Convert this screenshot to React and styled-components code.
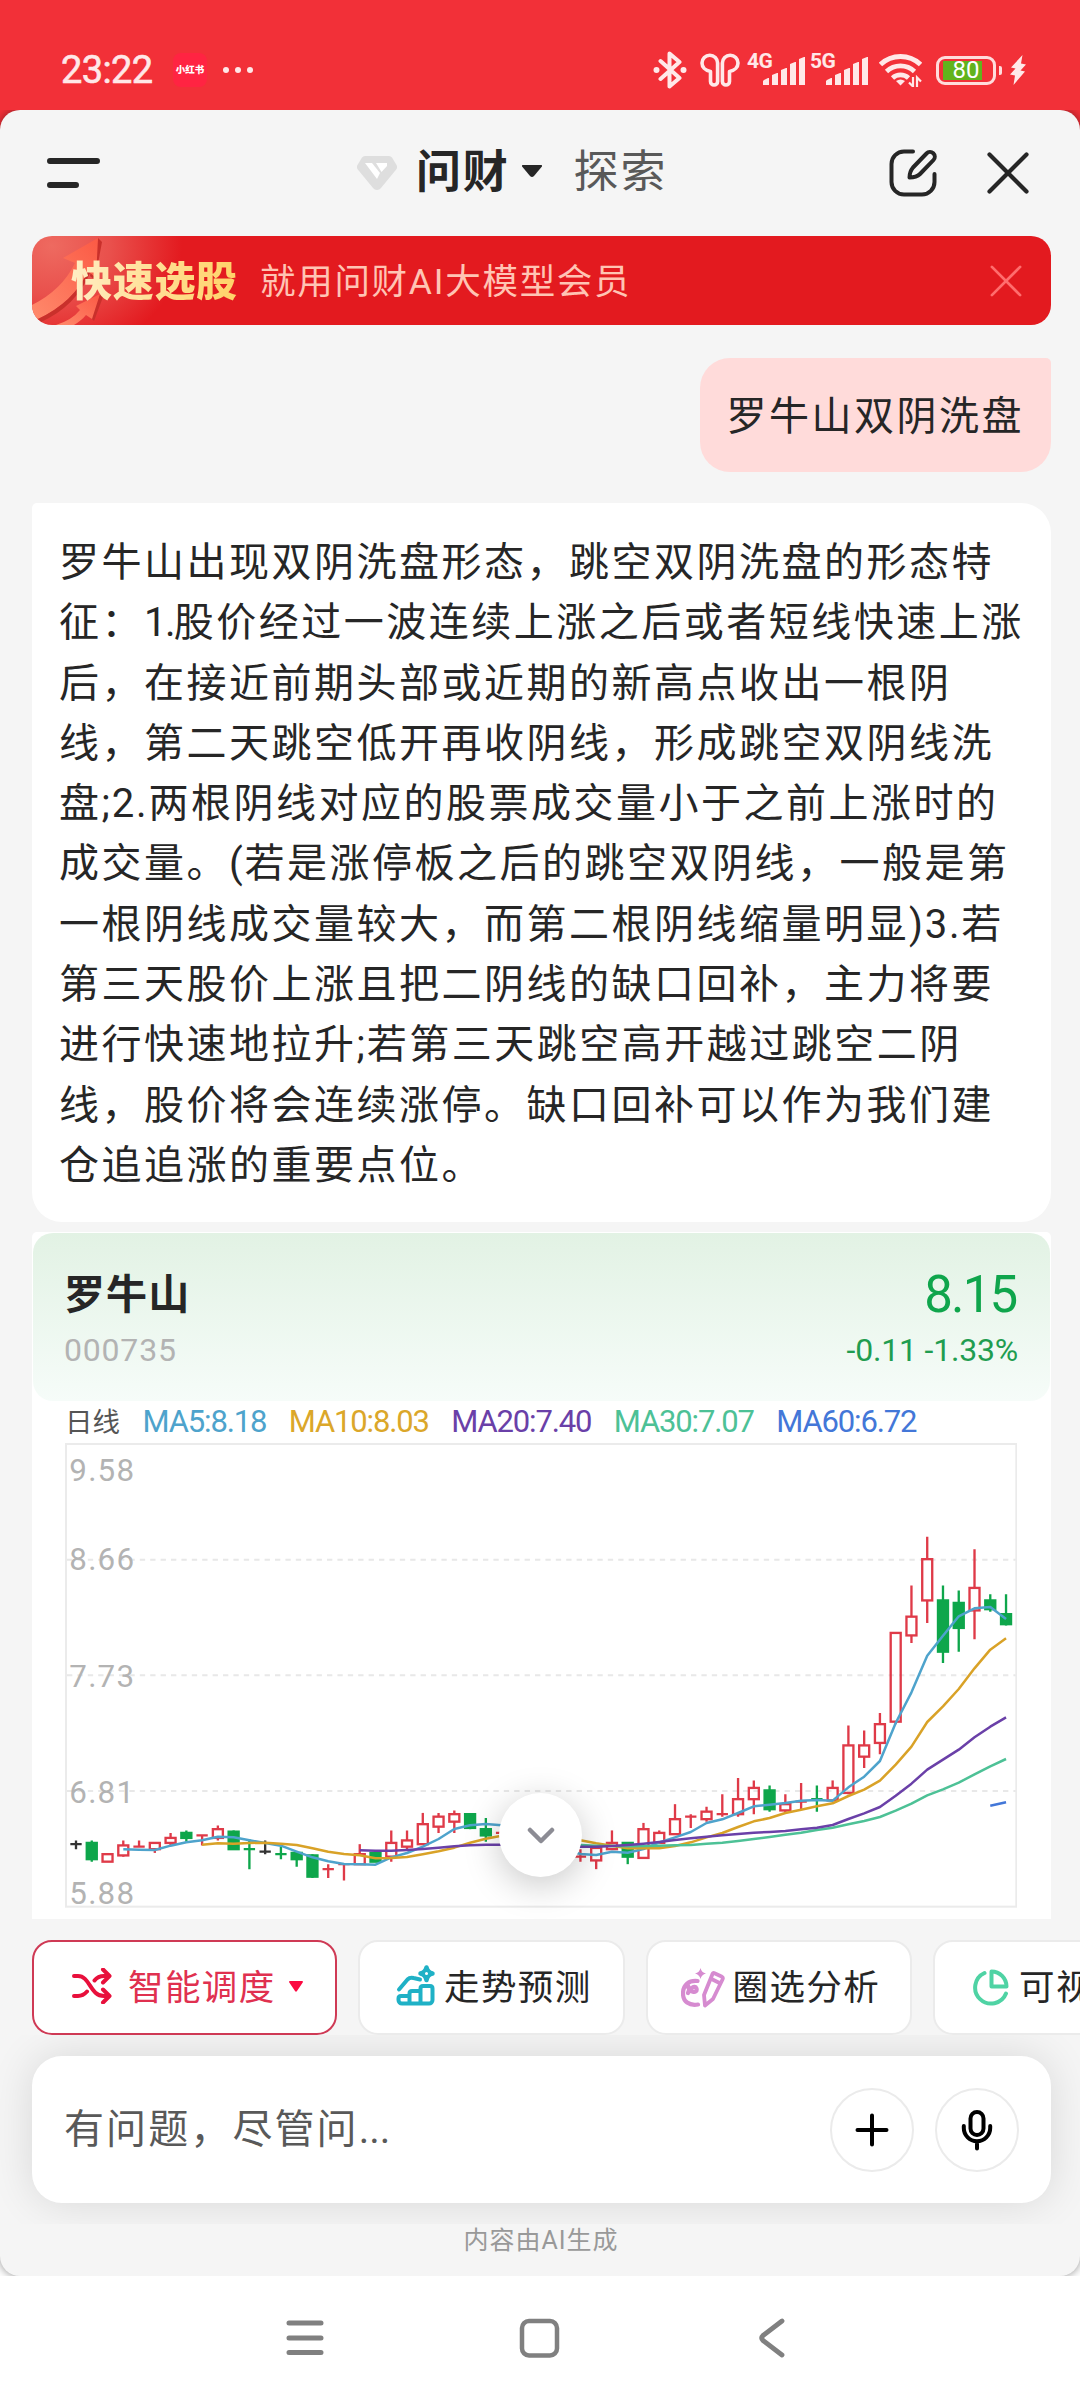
import React from 'react';
import styled, { createGlobalStyle } from 'styled-components';


const GlobalStyle = createGlobalStyle`
  * {
    box-sizing: border-box;
  }

  body {
    margin: 0;
    font-family: Roboto, 'Noto Sans CJK SC', sans-serif;
    color: #262626;
  }

  svg {
    display: block;
    flex-shrink: 0;
  }
`;

const Screen = styled.div`
  display: flex;
  flex-direction: column;
  width: 1080px;
  height: 2400px;
  overflow: hidden;
  background: linear-gradient(#f23038 50%, #ffffff 50%);
`;


const StatusBar = styled.div`
  position: relative;
  z-index: 1;
  display: flex;
  align-items: center;
  height: 110px;
  padding: 30px 54px 0 61px;
  background: #f23038;
  color: #ffe8e8;
`;

const Clock = styled.span`
  width: 112px;
  font-size: 38px;
  line-height: 44px;
  font-weight: 400;
  letter-spacing: -0.6px;
  -webkit-text-stroke: 0.6px currentColor;
`;

const AppBadge = styled.span`
  width: 34px;
  height: 34px;
  border-radius: 8px;
  background: #ff2442;
  color: #ffffff;
  font-size: 9.5px;
  font-weight: 900;
  line-height: 33px;
  text-align: center;
`;

const Dots = styled.div`
  display: flex;
  gap: 6px;
  margin-left: 16px;
`;

const Dot = styled.span`
  width: 6px;
  height: 6px;
  border-radius: 50%;
  background: #ffe8e8;
`;

const StatusIcons = styled.div`
  display: flex;
  align-items: center;
  margin-left: auto;
`;

const Signal = styled.div`
  display: flex;
  align-items: flex-start;
  width: 57px;
  height: 34px;
  margin-left: ${({ $gap }) => $gap || 6}px;
`;

const Network = styled.span`
  width: 16px;
  font-size: 21px;
  line-height: 17px;
  font-weight: 700;
  letter-spacing: -0.5px;
  white-space: nowrap;
`;

const Battery = styled.div`
  display: flex;
  align-items: center;
  justify-content: center;
  width: 60px;
  height: 29px;
  margin-left: 14px;
  border: 3px solid #ffdcdc;
  border-radius: 9px;
  background: linear-gradient(90deg, #62b31c 78%, transparent 78%) 4px 2px / 50px 19px no-repeat;
  font-size: 24px;
  line-height: 23px;
  color: #ffffff;
`;

const BatteryCap = styled.span`
  width: 3px;
  height: 9px;
  margin: 0 8px 0 3px;
  border-radius: 0 2px 2px 0;
  background: #ffdcdc;
`;


const Sheet = styled.main`
  display: flex;
  flex-direction: column;
  height: 2166px;
  border-radius: 20px;
  background: #f5f5f5;
  box-shadow: 0 0 10px rgba(0, 0, 0, 0.45);
  overflow: hidden;
`;

const Header = styled.header`
  display: flex;
  align-items: center;
  height: 126px;
  padding: 0 51px 0 47px;
`;

const Tab = styled.span`
  font-size: 45px;
  line-height: 60px;
  letter-spacing: 1.8px;
  font-weight: ${({ $active }) => ($active ? 700 : 400)};
  color: ${({ $active }) => ($active ? '#262626' : '#595959')};
`;

const TabGroup = styled.div`
  display: flex;
  align-items: center;
  margin-left: 257px;
`;

const HeaderActions = styled.div`
  display: flex;
  align-items: center;
  gap: 50px;
  margin-left: auto;
`;


const Banner = styled.div`
  position: relative;
  display: flex;
  align-items: center;
  flex-shrink: 0;
  width: 1019px;
  height: 89px;
  margin-left: 32px;
  padding: 0 29px 0 39px;
  border-radius: 20px;
  overflow: hidden;
  background: radial-gradient(ellipse 130px 110px at 20px 10px, #ee6a60 0%, #e9504c 45%, #e31a1f 100%);
`;

const BannerArt = styled.svg`
  position: absolute;
  left: 0;
  top: 0;
`;

const BannerTitle = styled.strong`
  position: relative;
  width: 189px;
  padding-top: 3px;
  font-size: 41px;
  line-height: 56px;
  font-weight: 900;
  letter-spacing: 0.7px;
  background: linear-gradient(90deg, #ffedc4, #ffd267 88%);
  background-clip: text;
  color: transparent;
`;

const BannerText = styled.span`
  flex: 1;
  padding-top: 3px;
  font-size: 35.5px;
  line-height: 50px;
  letter-spacing: 1.7px;
  color: #ffc4b4;
`;


const UserBubble = styled.div`
  align-self: flex-end;
  flex-shrink: 0;
  width: 351px;
  height: 114px;
  margin: 33px 29px 31px 0;
  padding: 29px 0 0 26.5px;
  border-radius: 30px 5px 30px 30px;
  background: #ffdbda;
  font-size: 40px;
  line-height: 60px;
  letter-spacing: 2.5px;
`;

const Answer = styled.div`
  flex-shrink: 0;
  width: 1019px;
  height: 719px;
  margin-left: 32px;
  padding: 30px 0 0 27px;
  border-radius: 5px 30px 30px 30px;
  background: #ffffff;
`;

const AnswerLine = styled.p`
  margin: 0;
  font-size: 40px;
  line-height: 60.3px;
  letter-spacing: 2.5px;
  white-space: nowrap;
`;

const Latin = styled.span`
  letter-spacing: ${({ $tight }) => ($tight ? -1.6 : 1.8)}px;
`;


const StockCard = styled.section`
  position: relative;
  flex-shrink: 0;
  width: 1019px;
  height: 687px;
  margin: 10px 0 0 32px;
  padding: 1px;
  border-radius: 5px 5px 0 0;
  background: #ffffff;
`;

const Quote = styled.div`
  display: flex;
  justify-content: space-between;
  height: 168px;
  padding: 33px 33px 0 31px;
  border-radius: 20px;
  background: linear-gradient(#e2f2e4, #f6fcf9);
`;

const QuoteColumn = styled.div`
  display: flex;
  flex-direction: column;
  align-items: ${({ $align }) => $align || 'flex-start'};
`;

const StockName = styled.strong`
  font-size: 41px;
  line-height: 58px;
  letter-spacing: 1.1px;
`;

const StockCode = styled.span`
  font-size: 32px;
  line-height: 52px;
  letter-spacing: 0.8px;
  color: #b3b3b3;
`;

const Price = styled.span`
  font-size: 51px;
  line-height: 58px;
  letter-spacing: -1.8px;
  margin-right: 0.5px;
  color: #0fa54c;
`;

const Change = styled.span`
  font-size: 32px;
  line-height: 52px;
  letter-spacing: -0.2px;
  margin-right: -1px;
  color: #1f9d50;
`;

const Legend = styled.div`
  display: flex;
  align-items: center;
  gap: 22.5px;
  height: 42px;
  padding-left: 32px;
  padding-bottom: 1px;
  color: #555555;
`;

const LegendItem = styled.span`
  font-size: 31px;
  letter-spacing: -1.15px;
  color: ${({ $color }) => $color};
`;

const Period = styled.span`
  padding-bottom: 3px;
  font-size: 27.5px;
`;

const Chart = styled.svg`
  margin-left: 32px;
`;

const AxisLabel = styled.text`
  font-size: 94px;
  letter-spacing: 3.6px;
  fill: #b3b3b3;
`;

const ScrollButton = styled.button`
  position: absolute;
  left: 467px;
  bottom: 42px;
  display: flex;
  align-items: center;
  justify-content: center;
  width: 83px;
  height: 84px;
  padding: 0;
  border: none;
  border-radius: 50%;
  background: #ffffff;
  box-shadow: 0 8px 36px rgba(0, 0, 0, 0.22);
`;


const Chips = styled.div`
  display: flex;
  gap: 21px;
  flex-shrink: 0;
  margin: 21px 0 0 32px;
`;

const Chip = styled.button`
  display: flex;
  align-items: center;
  flex-shrink: 0;
  width: ${({ $active }) => ($active ? 305 : 266.5)}px;
  height: 95px;
  padding: 0 0 0 ${({ $pad }) => $pad || 36}px;
  border: 2px solid ${({ $active }) => ($active ? '#cf3a55' : '#ebebeb')};
  border-radius: 20px;
  background: #ffffff;
  font-family: inherit;
  font-size: 35.5px;
  letter-spacing: 1.4px;
  white-space: nowrap;
  color: ${({ $active }) => ($active ? '#e0304f' : '#262626')};
`;

const ChipLabel = styled.span`
  margin: 0 ${({ $active }) => ($active ? 13 : 0)}px 0 ${({ $active }) => ($active ? 16 : 8)}px;
  padding-bottom: 6px;
`;


const InputArea = styled.div`
  flex-shrink: 0;
  height: 189px;
  padding: 21px 29px 0 32px;
  overflow: hidden;
`;

const InputBox = styled.div`
  display: flex;
  align-items: center;
  gap: 21px;
  height: 147px;
  padding: 0 32px;
  border-radius: 30px;
  background: #ffffff;
  box-shadow: 0 0 44px rgba(0, 0, 0, 0.12);
`;

const Placeholder = styled.span`
  flex: 1;
  padding-top: 1px;
  font-size: 40px;
  line-height: 60px;
  letter-spacing: 2.1px;
  color: #595959;
`;

const RoundButton = styled.button`
  display: flex;
  align-items: center;
  justify-content: center;
  width: 84px;
  height: 84px;
  padding: 0;
  border: 2px solid #ebebeb;
  border-radius: 50%;
  background: #ffffff;
`;

const Notice = styled.p`
  margin: 0;
  padding-left: 2px;
  font-size: 25px;
  line-height: 34px;
  letter-spacing: 1px;
  text-align: center;
  color: #999999;
`;


const NavBar = styled.nav`
  position: relative;
  z-index: 1;
  display: flex;
  align-items: center;
  justify-content: center;
  gap: 192px;
  height: 124px;
  padding-right: 2px;
  background: #ffffff;
`;


const answerLines = [
  '罗牛山出现双阴洗盘形态，跳空双阴洗盘的形态特',
  '征：1.股价经过一波连续上涨之后或者短线快速上涨',
  '后，在接近前期头部或近期的新高点收出一根阴',
  '线，第二天跳空低开再收阴线，形成跳空双阴线洗',
  '盘;2.两根阴线对应的股票成交量小于之前上涨时的',
  '成交量。(若是涨停板之后的跳空双阴线，一般是第',
  '一根阴线成交量较大，而第二根阴线缩量明显)3.若',
  '第三天股价上涨且把二阴线的缺口回补，主力将要',
  '进行快速地拉升;若第三天跳空高开越过跳空二阴',
  '线，股价将会连续涨停。缺口回补可以作为我们建',
  '仓追追涨的重要点位。',
];

const legend = [
  { text: 'MA5:8.18', color: '#4ea3cc' },
  { text: 'MA10:8.03', color: '#dba72a' },
  { text: 'MA20:7.40', color: '#6a40a8' },
  { text: 'MA30:7.07', color: '#4dc196' },
  { text: 'MA60:6.72', color: '#4377d8' },
];

// open, close, high, low
const candles = [
  [6.38, 6.38, 6.41, 6.34], [6.39, 6.26, 6.41, 6.24], [6.24, 6.3, 6.3, 6.24], [6.29, 6.37, 6.41, 6.28],
  [6.36, 6.36, 6.41, 6.36], [6.34, 6.39, 6.39, 6.31], [6.39, 6.43, 6.47, 6.37], [6.47, 6.43, 6.49, 6.4],
  [6.45, 6.45, 6.45, 6.37], [6.43, 6.5, 6.53, 6.41], [6.48, 6.34, 6.49, 6.34], [6.34, 6.34, 6.42, 6.18],
  [6.32, 6.32, 6.41, 6.3], [6.3, 6.3, 6.36, 6.26], [6.31, 6.26, 6.32, 6.2], [6.29, 6.12, 6.3, 6.11],
  [6.18, 6.18, 6.22, 6.11], [6.22, 6.22, 6.22, 6.09], [6.22, 6.3, 6.38, 6.22], [6.31, 6.24, 6.32, 6.24],
  [6.28, 6.39, 6.49, 6.24], [6.36, 6.41, 6.49, 6.34], [6.38, 6.54, 6.63, 6.38], [6.52, 6.6, 6.63, 6.47],
  [6.56, 6.62, 6.65, 6.47], [6.62, 6.51, 6.62, 6.5], [6.5, 6.45, 6.59, 6.4], [6.47, 6.47, 6.5, 6.42],
  [6.47, 6.42, 6.5, 6.4], [6.42, 6.38, 6.45, 6.35], [6.38, 6.33, 6.4, 6.3], [6.33, 6.28, 6.35, 6.26],
  [6.28, 6.28, 6.34, 6.24], [6.25, 6.35, 6.35, 6.18], [6.34, 6.39, 6.49, 6.34], [6.39, 6.28, 6.39, 6.22],
  [6.27, 6.5, 6.55, 6.27], [6.39, 6.47, 6.49, 6.39], [6.46, 6.58, 6.7, 6.46], [6.6, 6.6, 6.62, 6.51],
  [6.58, 6.64, 6.68, 6.56], [6.62, 6.62, 6.78, 6.6], [6.62, 6.74, 6.91, 6.6], [6.74, 6.83, 6.89, 6.62],
  [6.81, 6.66, 6.85, 6.64], [6.65, 6.7, 6.78, 6.63], [6.72, 6.72, 6.87, 6.66], [6.74, 6.74, 6.85, 6.64],
  [6.73, 6.83, 6.89, 6.73], [6.79, 7.17, 7.33, 6.78], [7.08, 7.17, 7.29, 6.99], [7.19, 7.34, 7.43, 7.1],
  [7.36, 8.07, 8.07, 7.34], [8.05, 8.2, 8.45, 7.99], [8.33, 8.66, 8.84, 8.15], [8.33, 7.92, 8.45, 7.83],
  [8.31, 8.11, 8.41, 7.92], [8.25, 8.43, 8.74, 8.02], [8.33, 8.26, 8.38, 8.24], [8.22, 8.14, 8.38, 8.13],
];

const dojiColors = {
  0: '#333333', 4: '#df3a48', 8: '#df3a48', 11: '#0ea64b', 12: '#333333', 13: '#0ea64b', 16: '#df3a48',
  17: '#df3a48', 27: '#df3a48', 32: '#df3a48', 39: '#df3a48', 41: '#df3a48', 46: '#df3a48', 47: '#0ea64b',
};

const averages = [
  {
    color: '#4ea3cc',
    start: 3,
    ys: [1289, 1290, 1291, 1278, 1268, 1262, 1251, 1253, 1262, 1270, 1278, 1296, 1313, 1325, 1333, 1334, 1335,
      1313, 1300, 1281, 1258, 1228, 1217, 1213, 1217, 1221, 1240, 1260, 1290, 1303, 1306, 1296, 1299, 1288, 1268,
      1253, 1237, 1210, 1199, 1180, 1160, 1155, 1150, 1143, 1141, 1143, 1103, 1071, 1024, 910, 818, 708, 648, 590,
      566, 562, 598],
  },
  {
    color: '#d9a227',
    start: 8,
    ys: [1275, 1271, 1272, 1270, 1269, 1272, 1276, 1286, 1296, 1303, 1307, 1316, 1315, 1312, 1304, 1295, 1284,
      1269, 1257, 1248, 1243, 1241, 1245, 1253, 1262, 1271, 1278, 1286, 1286, 1286, 1279, 1268, 1253, 1240, 1222,
      1205, 1195, 1180, 1170, 1160, 1151, 1129, 1110, 1083, 1035, 981, 907, 860, 808, 746, 690, 656],
  },
  {
    color: '#4dc196',
    start: 28,
    ys: [1270, 1272, 1274, 1275, 1276, 1278, 1279, 1280, 1279, 1278, 1277, 1276, 1272, 1269, 1264, 1258, 1252,
      1245, 1239, 1231, 1224, 1214, 1204, 1192, 1173, 1152, 1127, 1109, 1089, 1064, 1040, 1018],
  },
  {
    color: '#6a40a8',
    start: 18,
    ys: [1292, 1293, 1293, 1291, 1288, 1284, 1280, 1277, 1275, 1275, 1275, 1276, 1277, 1278, 1281, 1281, 1279,
      1276, 1272, 1267, 1261, 1256, 1251, 1247, 1243, 1239, 1237, 1234, 1229, 1224, 1216, 1198, 1181, 1162, 1128,
      1092, 1050, 1020, 990, 953, 921, 893],
  },
  { color: '#4377d8', start: 58, ys: [1158, 1148] },
];

const axis = [
  { text: '9.58', y: 185 },
  { text: '8.66', y: 452, grid: 420 },
  { text: '7.73', y: 801, grid: 767 },
  { text: '6.81', y: 1150, grid: 1114 },
  { text: '5.88', y: 1452 },
];

const candleX = (i) => 107 + 47.29 * i;
const priceY = (price) => (9.776 - price) * 375;

const Candle = ({ data, index }) => {
  const [open, close, high, low] = data;
  const x = candleX(index);
  const top = priceY(Math.max(open, close));
  const bottom = priceY(Math.min(open, close));

  if (open === close) {
    return (
      <path
        d={`M${x - 17} ${top}H${x + 17}M${x} ${priceY(high)}V${priceY(low)}`}
        stroke={dojiColors[index]}
        strokeWidth="7"
        fill="none"
      />
    );
  }

  const rising = close > open;
  const color = rising ? '#df3a48' : '#0ea64b';
  return (
    <g stroke={color} strokeWidth="7" fill={rising ? 'none' : color}>
      <path d={`M${x} ${priceY(high)}V${top}M${x} ${bottom}V${priceY(low)}`} />
      <rect x={x - 15} y={top} width="30" height={bottom - top} />
    </g>
  );
};

const KLineChart = () => (
  <Chart width="952" height="465" viewBox="74 70 2856 1395">
    <rect x="77" y="73" width="2851" height="1388" fill="none" stroke="#ebebeb" strokeWidth="6" />
    {axis.filter((a) => a.grid).map((a) => (
      <path key={a.text} d={`M80 ${a.grid}H2926`} stroke="#e8e8e8" strokeWidth="6" strokeDasharray="16 15.2" />
    ))}
    {axis.map((a) => (
      <AxisLabel key={a.text} x="87" y={a.y}>{a.text}</AxisLabel>
    ))}
    {candles.map((data, i) => (
      <Candle key={i} data={data} index={i} />
    ))}
    {averages.map((line) => (
      <polyline
        key={line.color}
        points={line.ys.map((y, i) => `${candleX(line.start + i)},${y}`).join(' ')}
        fill="none"
        stroke={line.color}
        strokeWidth="7.5"
        strokeLinejoin="round"
      />
    ))}
  </Chart>
);

const SignalBars = () => (
  <svg width="42" height="34" viewBox="0 0 42 34" fill="currentColor">
    <path d="M1 27l4-2h1v7H0v-4z" />
    <path d="M9 22l5-2h1v12H9z" />
    <path d="M18 17l5-2h1v17h-6z" />
    <path d="M27 11l5-2h1v23h-6z" />
    <path d="M36 6l5-2h1v28h-6z" />
  </svg>
);

const CloseIcon = ({ size, color, width }) => (
  <svg width={size} height={size} viewBox="0 0 42 42" fill="none" stroke={color} strokeWidth={width} strokeLinecap="round">
    <path d="M2.5 2.5L39.5 39.5M39.5 2.5L2.5 39.5" />
  </svg>
);

// Splits runs of ASCII out of a line so they can be tracked apart from the Chinese text
const renderLine = (line) =>
  line.split(/([!-~]+)/).map((part, i) => (i % 2 ? <Latin key={i} $tight={part[0] === '1'}>{part}</Latin> : part));

const App = () => {
  return (
    <Screen>
      <GlobalStyle />

      <StatusBar>
        <Clock>23:22</Clock>
        <AppBadge>小红书</AppBadge>
        <Dots>
          <Dot />
          <Dot />
          <Dot />
        </Dots>
        <StatusIcons>
          <svg width="34" height="38" viewBox="0 0 34 38" fill="none" stroke="currentColor" strokeWidth="4" strokeLinejoin="round" strokeLinecap="round">
            <path d="M7.5 10L26.5 27 16.5 35.5V2.5L26.5 11 7.5 28" />
            <circle cx="3.5" cy="19" r="3" fill="currentColor" stroke="none" />
            <circle cx="30.5" cy="19" r="3" fill="currentColor" stroke="none" />
          </svg>
          <svg width="40" height="34" viewBox="0 0 40 34" fill="none" stroke="currentColor" strokeWidth="3.6" strokeLinejoin="round" style={{ marginLeft: 13 }}>
            <path d="M10.5 18.500C5 17.500 2 14 2 10a7.800 7.800 0 0 1 15.600 0v18.500a3.500 3.500 0 0 1-7.100 0z" />
            <path d="M29.500 18.500C35 17.500 38 14 38 10a7.800 7.800 0 0 0-15.600 0v18.500a3.500 3.500 0 0 0 7.100 0z" />
          </svg>
          <Signal $gap={7}>
            <Network>4G</Network>
            <SignalBars />
          </Signal>
          <Signal>
            <Network>5G</Network>
            <SignalBars />
          </Signal>
          <svg width="43" height="34" viewBox="0 0 43 34" fill="none" stroke="currentColor" strokeWidth="4.800" style={{ marginLeft: 12 }}>
            <path d="M1.500 11.500a29 29 0 0 1 40 0" />
            <path d="M7.500 18.500a20.500 20.500 0 0 1 28 0" />
            <path d="M13.500 25a12 12 0 0 1 16 0" />
            <path d="M17 28q4.500-3 9 0l-4.500 4.500z" fill="currentColor" stroke="none" />
            <path d="M34 24v9.500l-4-4M38 34v-9.500l4 4" strokeWidth="2.200" />
          </svg>
          <Battery>80</Battery>
          <BatteryCap />
          <svg width="16" height="30" viewBox="0 0 16 30" fill="currentColor">
            <path d="M12.500 0L1 12.500 5.500 13.500 0 19.500 5 20.500 3.500 30 15 16.500 10.500 15.500 16 9.500 11 8.500z" />
          </svg>
        </StatusIcons>
      </StatusBar>

      <Sheet>
        <Header>
          <svg width="53" height="30" viewBox="0 0 53 30" stroke="#262626" strokeWidth="6" strokeLinecap="round">
            <path d="M3 3H50M3 27H29" />
          </svg>
          <TabGroup>
            <svg width="40" height="34" viewBox="0 0 40 34">
              <path d="M8 0H32a4 4 0 0 1 3 1.500L39.500 9a4 4 0 0 1-.3 4.500L24 32a5 5 0 0 1-8 0L.8 13.500A4 4 0 0 1 .5 9L5 1.500A4 4 0 0 1 8 0z" fill="#dedede" />
              <path d="M8 7h7l8 10-3 6z" fill="#ffffff" />
              <path d="M19 7h11v3l-5.500 6z" fill="#ffffff" />
            </svg>
            <Tab $active style={{ marginLeft: 19 }}>问财</Tab>
            <svg width="20" height="12" viewBox="0 0 20 12" style={{ margin: '-4px 32px 0 12px' }}>
              <path d="M1 0H19q2 0 .5 2L12 11q-2 2-4 0L.5 2Q-1 0 1 0z" fill="#262626" />
            </svg>
            <Tab>探索</Tab>
          </TabGroup>
          <HeaderActions>
            <svg width="48" height="48" viewBox="0 0 48 48" fill="none" stroke="#262626" strokeWidth="4" strokeLinecap="round" strokeLinejoin="round">
              <path d="M24 2.500H15A12.500 12.500 0 0 0 2.500 15V33A12.500 12.500 0 0 0 15 45.500H33A12.500 12.500 0 0 0 45.500 33V25" />
              <path d="M20.500 28.500C20.500 24 21.500 21.500 24 18.500L37.500 4.500a4.700 4.700 0 0 1 7 6.500L31 25c-3 3-6 3.500-10.500 3.500z" />
            </svg>
            <CloseIcon size={42} color="#262626" width={4.200} />
          </HeaderActions>
        </Header>

        <Banner>
          <BannerArt width="90" height="89" viewBox="0 0 90 89">
            <defs>
              <linearGradient id="arrow" x1="0" y1="1" x2="1" y2="0">
                <stop offset="0" stopColor="#ff8a6c" />
                <stop offset="1" stopColor="#fb5a45" />
              </linearGradient>
            </defs>
            <path d="M66 2l4 4-7 38-5-4z" fill="#c9302b" />
            <path d="M66 2L31 22l12 5Q30 54 0 69V80l6 3Q42 66 56 35l8 7z" fill="url(#arrow)" />
            <path d="M6 83Q42 66 56 35l2 2Q44 70 9 86z" fill="#c9302b" />
            <path d="M68 58l3 3-9 24-4-4z" fill="#c9302b" />
            <path d="M68 58L44 70l4 4Q40 84 24 89H42Q50 84 54 79l6 4z" fill="url(#arrow)" />
          </BannerArt>
          <BannerTitle>快速选股</BannerTitle>
          <BannerText>就用问财<Latin>AI</Latin>大模型会员</BannerText>
          <CloseIcon size={32} color="#ff6d6d" width={3.600} />
        </Banner>

        <UserBubble>罗牛山双阴洗盘</UserBubble>

        <Answer>
          {answerLines.map((line) => (
            <AnswerLine key={line}>{renderLine(line)}</AnswerLine>
          ))}
        </Answer>

        <StockCard>
          <Quote>
            <QuoteColumn>
              <StockName>罗牛山</StockName>
              <StockCode>000735</StockCode>
            </QuoteColumn>
            <QuoteColumn $align="flex-end">
              <Price>8.15</Price>
              <Change>-0.11 -1.33%</Change>
            </QuoteColumn>
          </Quote>
          <Legend>
            <Period>日线</Period>
            {legend.map((item) => (
              <LegendItem key={item.text} $color={item.color}>{item.text}</LegendItem>
            ))}
          </Legend>
          <KLineChart />
          <ScrollButton>
            <svg width="28" height="17" viewBox="0 0 28 17" fill="none" stroke="#8c8c94" strokeWidth="4.500" strokeLinecap="round" strokeLinejoin="round">
              <path d="M3 3L14 14 25 3" />
            </svg>
          </ScrollButton>
        </StockCard>

        <Chips>
          <Chip $active $pad={38}>
            <svg width="40" height="36" viewBox="0 0 40 36" fill="none" stroke="#e8103c" strokeWidth="4" strokeLinecap="round" strokeLinejoin="round" style={{ marginTop: -3 }}>
              <path d="M2 8H6C18 8 18 28 32 28H37M31 21.500L37.500 28 31 34.500" />
              <path d="M2 28H6Q11 28 15 23.500M22.500 12.500Q26 8 32 8H37M31 1.500L37.500 8 31 14.500" />
            </svg>
            <ChipLabel $active>智能调度</ChipLabel>
            <svg width="14" height="11" viewBox="0 0 14 11" style={{ marginTop: -2 }}>
              <path d="M1 0H13q1.500 0 .7 1.500L8 10q-1 1.500-2 0L.3 1.500Q-.5 0 1 0z" fill="#fb0a42" />
            </svg>
          </Chip>
          <Chip>
            <svg width="40" height="42" viewBox="0 0 40 42" fill="none" stroke="#1fb1c6" strokeWidth="4" strokeLinecap="round" strokeLinejoin="round" style={{ marginTop: -5 }}>
              <path d="M3 25.500L11.500 15.500q2.500-2.500 6-1.500l6.500 1.500" />
              <path d="M30.500 3.500Q31.500 8.500 36.500 9.500 31.500 10.500 30.500 16 29.500 10.500 24.500 9.500 29.500 8.500 30.500 3.500z" strokeWidth="4.500" />
              <circle cx="30.500" cy="9.500" r="1.500" fill="#ffffff" stroke="none" />
              <path d="M13.500 39.500H6a3.500 3.500 0 0 1-3.500-3.500V34.500Q2.500 32 5 32H13.500zM13.500 39.500V29.500Q13.500 27 16 27H24.500V39.500zM24.500 39.500V24.500Q24.500 22 27 22H34Q36.500 22 36.500 24.500V36a3.500 3.500 0 0 1-3.500 3.500z" />
            </svg>
            <ChipLabel>走势预测</ChipLabel>
          </Chip>
          <Chip $pad={33}>
            <svg width="44" height="40" viewBox="0 0 44 40" fill="none" stroke="#d68bd0" strokeWidth="4" strokeLinecap="round" strokeLinejoin="round">
              <path d="M17 36.500C8 38 2 33.500 2 25.500 2 17 8 12 16.500 13M7 17C7 25 17 26 15.500 20.500 14 16.500 8 21 7 25" strokeWidth="4.200" />
              <path d="M19.500 0Q20.500 4.500 25 5.500 20.500 6.500 19.500 11 18.500 6.500 14 5.500 18.500 4.500 19.500 0z" fill="#d68bd0" stroke="none" />
              <path d="M33 5L40.500 8.500Q42.500 9.500 41.500 11.500L32 31 24 37.500 23 27 31.500 6Q32 4.500 33 5zM30.500 11L38.500 15" strokeWidth="3.800" />
            </svg>
            <ChipLabel>圈选分析</ChipLabel>
          </Chip>
          <Chip $pad={36}>
            <svg width="38" height="38" viewBox="0 0 38 38" fill="none" stroke="#4fd3a4" strokeWidth="4" strokeLinecap="round" strokeLinejoin="round">
              <path d="M13.500 4A16 16 0 1 0 35 24.500" />
              <path d="M20.500 2.500A15 15 0 0 1 35.500 17.500H20.500z" />
            </svg>
            <ChipLabel style={{ marginLeft: 10 }}>可视化</ChipLabel>
          </Chip>
        </Chips>

        <InputArea>
          <InputBox>
            <Placeholder>有问题，尽管问<Latin $tight style={{ letterSpacing: 0 }}>...</Latin></Placeholder>
            <RoundButton>
              <svg width="34" height="34" viewBox="0 0 34 34" stroke="#000000" strokeWidth="4" strokeLinecap="round">
                <path d="M17 2.500V31.500M2.500 17H31.500" />
              </svg>
            </RoundButton>
            <RoundButton>
              <svg width="32" height="42" viewBox="0 0 32 42" fill="none" stroke="#000000" strokeWidth="4" strokeLinecap="round">
                <rect x="9.500" y="3" width="13" height="23" rx="6.500" />
                <path d="M2.800 17V19a13.200 13.200 0 0 0 26.400 0V17M16 33V39.500" />
              </svg>
            </RoundButton>
          </InputBox>
        </InputArea>

        <Notice>内容由AI生成</Notice>
      </Sheet>

      <NavBar>
        <svg width="42" height="40" viewBox="0 0 42 40" stroke="#808080" strokeWidth="5" strokeLinecap="round">
          <path d="M5 5H37M5 20H37M5 34.500H37" />
        </svg>
        <svg width="42" height="40" viewBox="0 0 42 40" fill="none" stroke="#808080" strokeWidth="4.500">
          <rect x="4" y="3" width="35" height="34.500" rx="7" />
        </svg>
        <svg width="42" height="40" viewBox="0 0 42 40" fill="none" stroke="#808080" strokeWidth="4.800" strokeLinecap="round" strokeLinejoin="round">
          <path d="M30 3L11 17.500Q8.500 20 11 22.500L30 37" />
        </svg>
      </NavBar>
    </Screen>
  );
};

export default App;
